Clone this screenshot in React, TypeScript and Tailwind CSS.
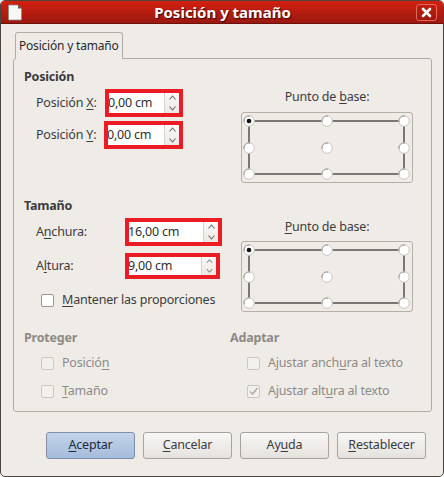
import React from 'react';

const Mn = ({ children }: { children: React.ReactNode }) => (
  <span className="underline underline-offset-2 decoration-1">{children}</span>
);

function Spinner() {
  return (
    <div className="w-[15px] flex flex-col items-center justify-center border-l border-[#d6d1cb] bg-gradient-to-b from-[#fbfaf9] to-[#ebe8e4]">
      <svg width="9" height="20" viewBox="0 0 9 20" fill="none" stroke="#6d6a66" strokeWidth="1.1">
        <path d="M1.5 6.5 L4.5 3 L7.5 6.5" />
        <path d="M1.5 13.5 L4.5 17 L7.5 13.5" />
      </svg>
    </div>
  );
}

function SpinField({ value, box }: { value: string; box: string }) {
  return (
    <div className={`flex border-[4px] border-[#ec1c24] ${box}`}>
      <div className="flex-1 bg-white flex items-center overflow-hidden text-[12.5px] text-[#2e2e2e] leading-none">
        <span className="-ml-px">{value}</span>
      </div>
      <Spinner />
    </div>
  );
}

function Check({ checked, disabled }: { checked?: boolean; disabled?: boolean }) {
  return (
    <div
      className={`w-[13px] h-[13px] rounded-[2px] border flex items-center justify-center ${
        disabled ? 'border-[#cdc7c0] bg-[#f2f0ed]' : 'border-[#9d968e] bg-white'
      }`}
    >
      {checked && (
        <svg width="11" height="11" viewBox="0 0 11 11" fill="none" stroke="#b3aea8" strokeWidth="1.6">
          <path d="M2 5.5 L4.5 8 L9.5 2" />
        </svg>
      )}
    </div>
  );
}

function BasePoint() {
  const xs = [8, 86, 163];
  const ys = [9, 36, 62];
  return (
    <div className="w-[172px] h-[71px] rounded-[3px] border border-[#b7b0a8] bg-[#efece8]">
      <svg width="170" height="69" viewBox="1 1 170 69">
        <rect x="8" y="9" width="155" height="53" fill="none" stroke="#1a1a1a" strokeWidth="1.1" />
        {ys.map((y) =>
          xs.map((x) => (
            <g key={`${x}-${y}`}>
              <circle cx={x} cy={y} r="5.3" fill="#ffffff" stroke="#cbc6c0" strokeWidth="1" />
              <path d={`M${x - 4.8} ${y + 1} A 4.8 4.8 0 0 1 ${x + 1} ${y - 4.8}`} stroke="#9b968f" fill="none" strokeWidth="1" />
            </g>
          ))
        )}
        <circle cx="8" cy="9" r="2.3" fill="#111" />
      </svg>
    </div>
  );
}

function Button({ children, primary }: { children: React.ReactNode; primary?: boolean }) {
  return (
    <button
      className={`w-[89px] h-[27px] rounded-[3px] border text-[12.5px] ${
        primary
          ? 'border-[#7d8fa9] bg-gradient-to-b from-[#c2d4ea] to-[#a5bcdb] text-[#1f2a36]'
          : 'border-[#a8a29b] bg-gradient-to-b from-[#f8f7f6] to-[#e5e2de] text-[#3c3c3c]'
      }`}
    >
      {children}
    </button>
  );
}

export default function App() {
  return (
    <div className="w-[444px] h-[477px] bg-white font-['Noto_Sans',sans-serif]">
      <div className="w-[444px] h-[477px] flex flex-col rounded-[5px] border border-[#4a4541] overflow-hidden bg-[#efece8]">
        {/* Title bar */}
        <div className="h-[23px] flex items-center justify-between px-[6px] bg-gradient-to-b from-[#d3200f] to-[#9b1810] border-b border-[#6d100a]">
          <svg width="16" height="17" viewBox="0 0 16 17">
            <path d="M1.5 1 H11 L14.5 4.5 V16 H1.5 Z" fill="#f7f7f5" stroke="#8a8a88" strokeWidth="0.8" />
            <path d="M11 1 V4.5 H14.5 Z" fill="#555" />
          </svg>
          <span className="text-[15px] font-bold text-white [text-shadow:1px_1px_1px_#3b0805] ml-[6px]">
            Posición y tamaño
          </span>
          <div className="w-[21px] h-[17px] rounded-[3px] border border-[#e2695e] bg-gradient-to-b from-[#c01d10] to-[#a0170f] flex items-center justify-center">
            <svg width="11" height="11" viewBox="0 0 11 11" stroke="#ffffff" strokeWidth="2.6" strokeLinecap="round">
              <path d="M2 2 L9 9 M9 2 L2 9" />
            </svg>
          </div>
        </div>

        {/* Body */}
        <div className="flex-1 flex flex-col px-[12px] pt-[8px] text-[#3c3c3c] text-[12.5px] tracking-[-0.2px]">
          <div className="relative z-10 ml-[2px] self-start h-[27px] rounded-t-[3px] border border-b-0 border-[#b3aca4] bg-[#efece8] flex items-center px-[3px] whitespace-nowrap text-[12px] text-[#2a2a2a]">
            Posición y tamaño
          </div>
          <div className="-mt-px w-[419px] h-[354px] rounded-[3px] border border-[#b3aca4] pl-[10px]">
            {/* Posición */}
            <div className="flex">
              <div className="w-[217px] pt-[10px]">
                <div className="font-bold h-[16px] leading-[16px]">Posición</div>
                <div className="flex items-center mt-[4px] pl-[12px]">
                  <span className="w-[69px]">
                    Posición <Mn>X</Mn>:
                  </span>
                  <SpinField value="0,00 cm" box="w-[78px] h-[28px]" />
                </div>
                <div className="flex items-center mt-[4px] pl-[12px]">
                  <span className="w-[68px]">
                    Posición <Mn>Y</Mn>:
                  </span>
                  <SpinField value="0,00 cm" box="w-[79px] h-[28px]" />
                </div>
              </div>
              <div className="pt-[30px] flex flex-col items-center">
                <div className="h-[16px] leading-[16px]">
                  Punto de <Mn>b</Mn>ase:
                </div>
                <div className="mt-[7px]">
                  <BasePoint />
                </div>
              </div>
            </div>

            {/* Tamaño */}
            <div className="flex mt-[15px]">
              <div className="w-[217px]">
                <div className="font-bold h-[16px] leading-[16px]">Tamaño</div>
                <div className="flex items-center mt-[4px] pl-[12px]">
                  <span className="w-[89px]">
                    A<Mn>n</Mn>chura:
                  </span>
                  <SpinField value="16,00 cm" box="w-[97px] h-[28px]" />
                </div>
                <div className="flex items-center mt-[7px] pl-[12px]">
                  <span className="w-[89px]">
                    A<Mn>l</Mn>tura:
                  </span>
                  <SpinField value="9,00 cm" box="w-[95px] h-[26px]" />
                </div>
                <div className="flex items-center gap-[8px] mt-[12px] pl-[17px]">
                  <Check />
                  <span>
                    <Mn>M</Mn>antener las proporciones
                  </span>
                </div>
              </div>
              <div className="pt-[21px] flex flex-col items-center">
                <div className="h-[16px] leading-[16px]">
                  <Mn>P</Mn>unto de base:
                </div>
                <div className="mt-[6px]">
                  <BasePoint />
                </div>
              </div>
            </div>

            {/* Proteger / Adaptar */}
            <div className="flex mt-[18px] text-[#8d8a86]">
              <div className="w-[206px]">
                <div className="font-bold h-[16px] leading-[16px]">Proteger</div>
                <div className="flex items-center gap-[8px] mt-[9px] pl-[17px] h-[16px]">
                  <Check disabled />
                  <span>
                    Posició<Mn>n</Mn>
                  </span>
                </div>
                <div className="flex items-center gap-[8px] mt-[12px] pl-[17px] h-[16px]">
                  <Check disabled />
                  <span>
                    <Mn>T</Mn>amaño
                  </span>
                </div>
              </div>
              <div>
                <div className="font-bold h-[16px] leading-[16px]">Adaptar</div>
                <div className="flex items-center gap-[8px] mt-[9px] pl-[17px] h-[16px]">
                  <Check disabled />
                  <span>
                    Ajustar anch<Mn>u</Mn>ra al texto
                  </span>
                </div>
                <div className="flex items-center gap-[8px] mt-[12px] pl-[17px] h-[16px]">
                  <Check disabled checked />
                  <span>
                    Ajustar alt<Mn>u</Mn>ra al texto
                  </span>
                </div>
              </div>
            </div>
          </div>

          {/* Buttons */}
          <div className="flex justify-end gap-[8px] mt-[20px] pr-[5px]">
            <Button primary>
              <Mn>A</Mn>ceptar
            </Button>
            <Button>
              <Mn>C</Mn>ancelar
            </Button>
            <Button>
              Ay<Mn>u</Mn>da
            </Button>
            <Button>
              <Mn>R</Mn>establecer
            </Button>
          </div>
        </div>
      </div>
    </div>
  );
}
